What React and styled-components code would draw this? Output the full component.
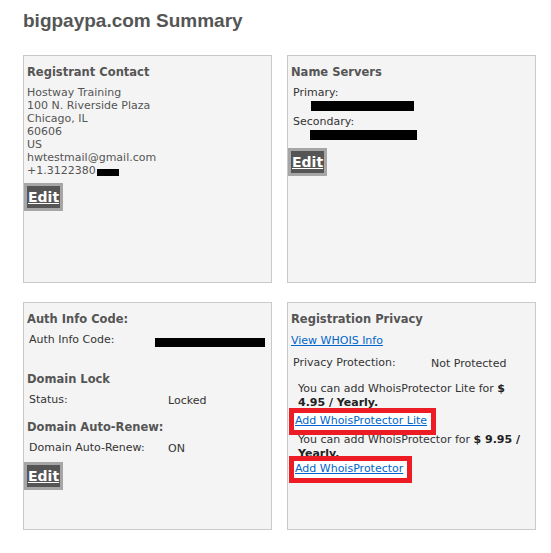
import React from 'react';
import styled, { createGlobalStyle } from 'styled-components';

const contact = [
    'Hostway Training',
    '100 N. Riverside Plaza',
    'Chicago, IL',
    '60606',
    'US',
    'hwtestmail@gmail.com',
];

export default function App() {
    return (
        <Page>
            <GlobalStyle />
            <Title>bigpaypa.com Summary</Title>
            <Grid>
                <Panel>
                    <Heading>Registrant Contact</Heading>
                    <Lines>
                        {contact.map((line) => (
                            <div key={line}>{line}</div>
                        ))}
                        <div>
                            +1.3122380<PhoneBar />
                        </div>
                    </Lines>
                    <EditButton $top={6}>Edit</EditButton>
                </Panel>

                <Panel>
                    <Heading>Name Servers</Heading>
                    <Label>Primary:</Label>
                    <Bar $w={103} $h={10} $left={23} $top={2} />
                    <Label $top={4}>Secondary:</Label>
                    <Bar $w={107} $h={10} $left={22} $top={2} />
                    <EditButton $top={8}>Edit</EditButton>
                </Panel>

                <Panel>
                    <Heading>Auth Info Code:</Heading>
                    <InfoRow $label={126}>
                        <span>Auth Info Code:</span>
                        <Bar $w={110} $h={9} $top={5} />
                    </InfoRow>
                    <Heading $top={25}>Domain Lock</Heading>
                    <InfoRow $label={139}>
                        <span>Status:</span>
                        <Value>Locked</Value>
                    </InfoRow>
                    <Heading $top={11}>Domain Auto-Renew:</Heading>
                    <InfoRow $label={139}>
                        <span>Domain Auto-Renew:</span>
                        <Value>ON</Value>
                    </InfoRow>
                    <EditButton $top={5}>Edit</EditButton>
                </Panel>

                <Panel>
                    <Heading>Registration Privacy</Heading>
                    <Link href="#" $top={1} $left={3}>View WHOIS Info</Link>
                    <InfoRow $label={138} $top={9}>
                        <span>Privacy Protection:</span>
                        <Value>Not Protected</Value>
                    </InfoRow>
                    <Offer $top={10}>
                        You can add WhoisProtector Lite for <b>$ 4.95 / Yearly.</b>
                    </Offer>
                    <Highlight $top={-2}>
                        <Link href="#">Add WhoisProtector Lite</Link>
                    </Highlight>
                    <Offer $top={-2}>
                        You can add WhoisProtector for <b>$ 9.95 / Yearly.</b>
                    </Offer>
                    <Highlight $top={-5}>
                        <Link href="#">Add WhoisProtector</Link>
                    </Highlight>
                </Panel>
            </Grid>
        </Page>
    );
}

const GlobalStyle = createGlobalStyle`
    html, body {
        margin: 0;
        padding: 0;
        background: #fff;
    }
    body {
        font-family: "DejaVu Sans", Verdana, sans-serif;
    }
`

const Page = styled.div`
    padding: 10px 0 0 23px;
`

const Title = styled.h1`
    margin: 0;
    font-family: "Liberation Sans", Arial, sans-serif;
    font-size: 19px;
    line-height: 22px;
    font-weight: bold;
    color: #555;
`

const Grid = styled.div`
    display: grid;
    grid-template-columns: 249px 249px;
    grid-auto-rows: 228px;
    column-gap: 15px;
    row-gap: 19px;
    margin-top: 23px;
`

const Panel = styled.section`
    box-sizing: border-box;
    border: 1px solid #c9c9c9;
    background: #f4f4f4;
    padding: 9px 0 0;
    display: flex;
    flex-direction: column;
    align-items: flex-start;
`

const Heading = styled.h2`
    margin: ${(p) => p.$top || 0}px 0 7px 3px;
    font-size: 11.5px;
    line-height: 14px;
    font-weight: bold;
    color: #555;
`

const Lines = styled.div`
    padding-left: 3px;
    font-size: 11px;
    line-height: 13px;
    color: #555;
`

const PhoneBar = styled.span`
    display: inline-block;
    width: 22px;
    height: 7px;
    margin-left: 1px;
    vertical-align: -2px;
    background: #000;
`

const Label = styled.div`
    margin: ${(p) => p.$top || 0}px 0 0 5px;
    font-size: 11px;
    line-height: 13px;
    color: #333;
`

const Bar = styled.span`
    display: block;
    width: ${(p) => p.$w}px;
    height: ${(p) => p.$h}px;
    margin: ${(p) => p.$top || 0}px 0 0 ${(p) => p.$left || 0}px;
    background: #000;
`

const InfoRow = styled.div`
    display: grid;
    grid-template-columns: ${(p) => p.$label}px auto;
    align-items: start;
    margin-top: ${(p) => p.$top || 0}px;
    padding-left: 5px;
    font-size: 11px;
    line-height: 13px;
    color: #333;
`

const Value = styled.span`
    line-height: 16px;
`

const EditButton = styled.button`
    margin: ${(p) => p.$top}px 0 0;
    padding: 2px 1px;
    border: 3px solid #a6a6a6;
    background: #555;
    color: #fff;
    font-family: "DejaVu Sans", Verdana, sans-serif;
    font-size: 14px;
    line-height: 18px;
    font-weight: bold;
    text-decoration: underline;
    cursor: pointer;
`

const Link = styled.a`
    display: block;
    margin: ${(p) => p.$top || 0}px 0 0 ${(p) => p.$left || 0}px;
    font-size: 11px;
    line-height: 13px;
    color: #0066cc;
    text-decoration: underline;
`

const Offer = styled.p`
    margin: ${(p) => p.$top || 0}px 0 0;
    padding: 0 4px 0 10px;
    font-size: 11px;
    line-height: 14px;
    color: #333;

    b {
        color: #222;
    }
`

const Highlight = styled.div`
    position: relative;
    margin: ${(p) => p.$top || 0}px 0 0 1px;
    padding: 1px 4px 3px 1px;
    border: 5px solid #ed1c24;
    background: #fff;
`
